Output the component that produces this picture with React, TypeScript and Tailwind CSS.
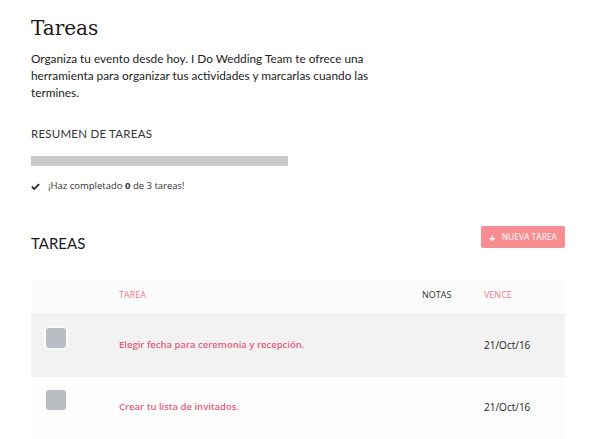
import React from 'react';

const tasks = [
    { title: 'Elegir fecha para ceremonia y recepción.', due: '21/Oct/16' },
    { title: 'Crear tu lista de invitados.', due: '21/Oct/16' },
];

const App = () => {
    return (
        <div className="min-h-screen bg-white pl-[31px] pr-[35px] pt-[14px] font-['Open_Sans',sans-serif] text-[#222]">
            <h1 className="font-['DejaVu_Serif',serif] text-[20px] leading-[28px] text-[#1a1a1a]">Tareas</h1>
            <p className="mt-[8px] w-[342px] font-['Lato',sans-serif] text-[11.8px] leading-[17px] text-[#222]">
                Organiza tu evento desde hoy. I Do Wedding Team te ofrece una herramienta para organizar tus actividades y marcarlas cuando las termines.
            </p>

            <h2 className="mt-[26px] font-['Lato',sans-serif] text-[11.5px] tracking-[0.02em] leading-[14px] text-[#333]">RESUMEN DE TAREAS</h2>
            <div className="mt-[15px] h-[10px] w-[257px] bg-[#cccccc]" />
            <div className="mt-[13px] flex items-center gap-[8px] text-[9.5px] text-[#333]">
                <svg className="h-[9px] w-[9px]" viewBox="0 0 10 10" fill="none" stroke="#222" strokeWidth={2}>
                    <path d="M1 5.2l2.6 2.6L9 2.3" />
                </svg>
                <span>¡Haz completado <b>0</b> de 3 tareas!</span>
            </div>

            <div className="mt-[28px] flex items-center justify-between">
                <h2 className="font-['Lato',sans-serif] text-[15px] leading-[20px] text-[#1a1a1a] mt-[12px]">TAREAS</h2>
                <button className="flex h-[22px] items-center gap-[6px] rounded-[2px] bg-[#f88d92] px-[8px] text-[8.5px] text-white">
                    <span className="text-[11px] font-bold leading-none">+</span>
                    NUEVA TAREA
                </button>
            </div>

            <div className="mt-[26px]">
                <div className="flex h-[36px] items-center border-b border-[#ececec] bg-[#fbfbfb] pb-[4px] text-[9px]">
                    <div className="w-[88px]" />
                    <div className="flex-1 text-[#f07b8c]">TAREA</div>
                    <div className="w-[62px] text-[#333]">NOTAS</div>
                    <div className="w-[81px] text-[#f07b8c]">VENCE</div>
                </div>
                {tasks.map((t, i) => (
                    <div key={i} className={`flex h-[62px] items-start ${i % 2 === 0 ? 'bg-[#f2f2f2]' : 'bg-[#fdfdfd]'}`}>
                        <div className="w-[88px] pl-[15px] pt-[13px]">
                            <div className="h-[20px] w-[20px] rounded-[3px] bg-[#b9bec4] shadow-[0_0_0_2px_#fafafa]" />
                        </div>
                        <div className="flex-1 pt-[23px] text-[9.5px] font-semibold text-[#e45d7a]">{t.title}</div>
                        <div className="w-[62px]" />
                        <div className="w-[81px] pt-[23px] text-[10px] text-[#222]">{t.due}</div>
                    </div>
                ))}
            </div>
        </div>
    );
};

export default App;
